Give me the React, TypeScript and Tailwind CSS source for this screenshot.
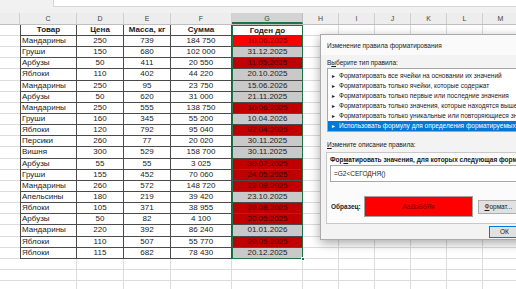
import React from "react";

type Row = [string, string, string, string, string, "hot" | "red" | "gray"];

const rows: Row[] = [
  ["Мандарины", "250", "739", "184 750", "10.06.2025", "hot"],
  ["Груши", "150", "680", "102 000", "31.12.2025", "gray"],
  ["Арбузы", "50", "411", "20 550", "11.05.2025", "red"],
  ["Яблоки", "110", "402", "44 220", "20.10.2025", "gray"],
  ["Мандарины", "250", "95", "23 750", "15.06.2026", "gray"],
  ["Арбузы", "50", "620", "31 000", "21.11.2025", "gray"],
  ["Мандарины", "250", "555", "138 750", "10.06.2025", "red"],
  ["Груши", "160", "345", "55 200", "10.04.2026", "gray"],
  ["Яблоки", "120", "792", "95 040", "02.04.2025", "red"],
  ["Персики", "260", "77", "20 020", "30.11.2025", "gray"],
  ["Вишня", "300", "529", "158 700", "30.11.2025", "gray"],
  ["Арбузы", "55", "55", "3 025", "30.07.2025", "red"],
  ["Груши", "155", "452", "70 060", "24.05.2025", "red"],
  ["Мандарины", "260", "572", "148 720", "22.09.2025", "red"],
  ["Апельсины", "180", "219", "39 420", "23.10.2025", "gray"],
  ["Яблоки", "105", "371", "38 955", "20.08.2025", "red"],
  ["Арбузы", "50", "82", "4 100", "20.05.2025", "red"],
  ["Мандарины", "220", "392", "86 240", "01.01.2026", "gray"],
  ["Яблоки", "110", "507", "55 770", "20.05.2025", "red"],
  ["Яблоки", "115", "682", "78 430", "20.12.2025", "gray"],
];

const letters = ["H", "I", "J", "K", "L", "M"];

const fill = {
  hot: "bg-[#ff0000] text-[#7a0000]",
  red: "bg-[#c00000] text-[#3c0000]",
  gray: "bg-[#c9c9c9] text-[#222]",
};

const rules = [
  "Форматировать все ячейки на основании их значений",
  "Форматировать только ячейки, которые содержат",
  "Форматировать только первые или последние значения",
  "Форматировать только значения, которые находятся выше или ниже среднего",
  "Форматировать только уникальные или повторяющиеся значения",
  "Использовать формулу для определения форматируемых ячеек",
];

const Empty = () => (
  <>
    {letters.map((l) => (
      <div key={l} className="w-[36px] shrink-0 border-r border-b border-[#dcdcdc]" />
    ))}
  </>
);

const SheetRow = ({ r, last }: { r: Row; last: boolean }) => (
  <div className="flex h-[11.15px] leading-[10px]">
    <div className="w-[20px] shrink-0 border-b border-[#dcdcdc]" />
    <div className="w-[57px] shrink-0 border-x border-b border-[#4a4a4a] pl-[1px] truncate">{r[0]}</div>
    <div className="w-[47px] shrink-0 border-r border-b border-[#4a4a4a] text-center">{r[1]}</div>
    <div className="w-[47px] shrink-0 border-r border-b border-[#4a4a4a] text-center">{r[2]}</div>
    <div className="w-[61px] shrink-0 border-r border-b border-[#4a4a4a] text-center">{r[3]}</div>
    <div
      className={`relative w-[71px] shrink-0 border-x-[1.5px] border-x-[#217346] border-b text-center ${
        last ? "border-b-[1.5px] border-b-[#217346]" : "border-b-[#4a4a4a]"
      } ${fill[r[5]]}`}
    >
      {r[4]}
      {last && <span className="absolute -right-[3px] -bottom-[3px] w-[4px] h-[4px] bg-[#217346] border border-white" />}
    </div>
    <Empty />
  </div>
);

export default function App() {
  return (
    <div
      className="relative w-[516px] h-[289px] overflow-hidden bg-white text-[8px] text-[#222]"
      style={{ fontFamily: '"Liberation Sans", Arial, sans-serif' }}
    >
      <div className="h-[13px] bg-[#f1f1f1] flex">
        <div className="ml-[53px] flex-1 h-[7px] bg-white border-l border-b border-[#d6d6d6]" />
      </div>

      <div className="flex h-[12px] bg-[#ededed] border-b border-[#bebebe] text-[7px] text-[#444] leading-[11px]">
        <div className="w-[20px] shrink-0 border-r border-[#d0d0d0]" />
        {[
          ["C", "w-[57px]"],
          ["D", "w-[47px]"],
          ["E", "w-[47px]"],
          ["F", "w-[61px]"],
        ].map(([l, w]) => (
          <div key={l} className={`${w} shrink-0 border-r border-[#d0d0d0] text-center`}>
            {l}
          </div>
        ))}
        <div className="w-[71px] shrink-0 bg-[#d3d3d3] border-r border-[#bdbdbd] border-b-2 border-b-[#217346] text-center text-[#1f4d31]">
          G
        </div>
        {letters.map((l) => (
          <div key={l} className="w-[36px] shrink-0 border-r border-[#d0d0d0] text-center">
            {l}
          </div>
        ))}
      </div>

      <div className="flex h-[11px] leading-[10px] font-bold">
        <div className="w-[20px] shrink-0 border-b border-[#dcdcdc]" />
        <div className="w-[57px] shrink-0 border-x border-b border-[#4a4a4a] text-center">Товар</div>
        <div className="w-[47px] shrink-0 border-r border-b border-[#4a4a4a] text-center">Цена</div>
        <div className="w-[47px] shrink-0 border-r border-b border-[#4a4a4a] text-center">Масса, кг</div>
        <div className="w-[61px] shrink-0 border-r border-b border-[#4a4a4a] text-center">Сумма</div>
        <div className="w-[71px] shrink-0 border-x-[1.5px] border-t border-[#217346] border-b border-b-[#4a4a4a] text-center bg-white">
          Годен до
        </div>
        <Empty />
      </div>

      {rows.map((r, i) => (
        <SheetRow key={i} r={r} last={i === rows.length - 1} />
      ))}

      {[0, 1, 2].map((k) => (
        <div key={k} className="flex h-[11px]">
          <div className="w-[20px] shrink-0 border-b border-[#dcdcdc]" />
          <div className="w-[57px] shrink-0 border-r border-b border-[#dcdcdc]" />
          <div className="w-[47px] shrink-0 border-r border-b border-[#dcdcdc]" />
          <div className="w-[47px] shrink-0 border-r border-b border-[#dcdcdc]" />
          <div className="w-[61px] shrink-0 border-r border-b border-[#dcdcdc]" />
          <div className="w-[71px] shrink-0 border-r border-b border-[#dcdcdc]" />
          <Empty />
        </div>
      ))}

      <div
        className="absolute left-[320px] top-[34px] w-[210px] h-[206px] bg-[#f3f3f3] border border-[#aaaaaa] shadow-[0_3px_10px_rgba(0,0,0,0.35)] text-[6.5px] text-[#1a1a1a] leading-[9px] flex flex-col overflow-hidden"
      >
        <div className="h-[20px] pl-[6px] pt-[6px] bg-[#fafafa]">Изменение правила форматирования</div>
        <div className="pl-[6px] pt-[3px] h-[13px]">
          В<span className="underline">ы</span>берите тип правила:
        </div>
        <div className="ml-[6px] h-[64px] bg-white border border-[#a8a8a8] pt-[2px] flex flex-col">
          {rules.map((t, i) => (
            <div
              key={t}
              className={`h-[10px] pl-[3px] whitespace-nowrap leading-[10px] ${
                i === 5 ? "bg-[#0078d7] text-white" : ""
              }`}
            >
              <span className="text-[5px] mr-[3px]">►</span>
              {t}
            </div>
          ))}
        </div>
        <div className="pl-[6px] pt-[8px] h-[20px]">
          <span className="underline">И</span>змените описание правила:
        </div>
        <div className="ml-[5px] h-[72px] bg-[#fbfbfb] border border-[#c8c8c8] flex flex-col">
          <div className="pl-[3px] pt-[2px] h-[12px] font-bold whitespace-nowrap">
            Фор<span className="underline">м</span>атировать значения, для которых следующая формула является истинной:
          </div>
          <div className="ml-[3px] h-[17px] bg-white border border-[#a8a8a8] pl-[3px] leading-[15px]">
            =G2&lt;СЕГОДНЯ()
          </div>
          <div className="flex items-center mt-[14px]">
            <div className="w-[37px] pl-[4px] font-bold">Образец:</div>
            <div className="w-[111px] h-[21px] bg-[#ff0000] border border-[#a0a0a0] text-[#800000] flex items-center justify-center">
              AaBbБбЯя
            </div>
            <div className="ml-[5px] w-[50px] h-[14px] bg-[#e1e1e1] border border-[#adadad] pl-[5px] leading-[12px]">
              <span className="underline">Ф</span>ормат...
            </div>
          </div>
        </div>
        <div className="flex mt-[2px] pl-[168px]">
          <div className="w-[40px] h-[12px] bg-[#e1e1e1] border border-[#0078d7] leading-[10px] pl-[10px]">ОК</div>
        </div>
      </div>
    </div>
  );
}
